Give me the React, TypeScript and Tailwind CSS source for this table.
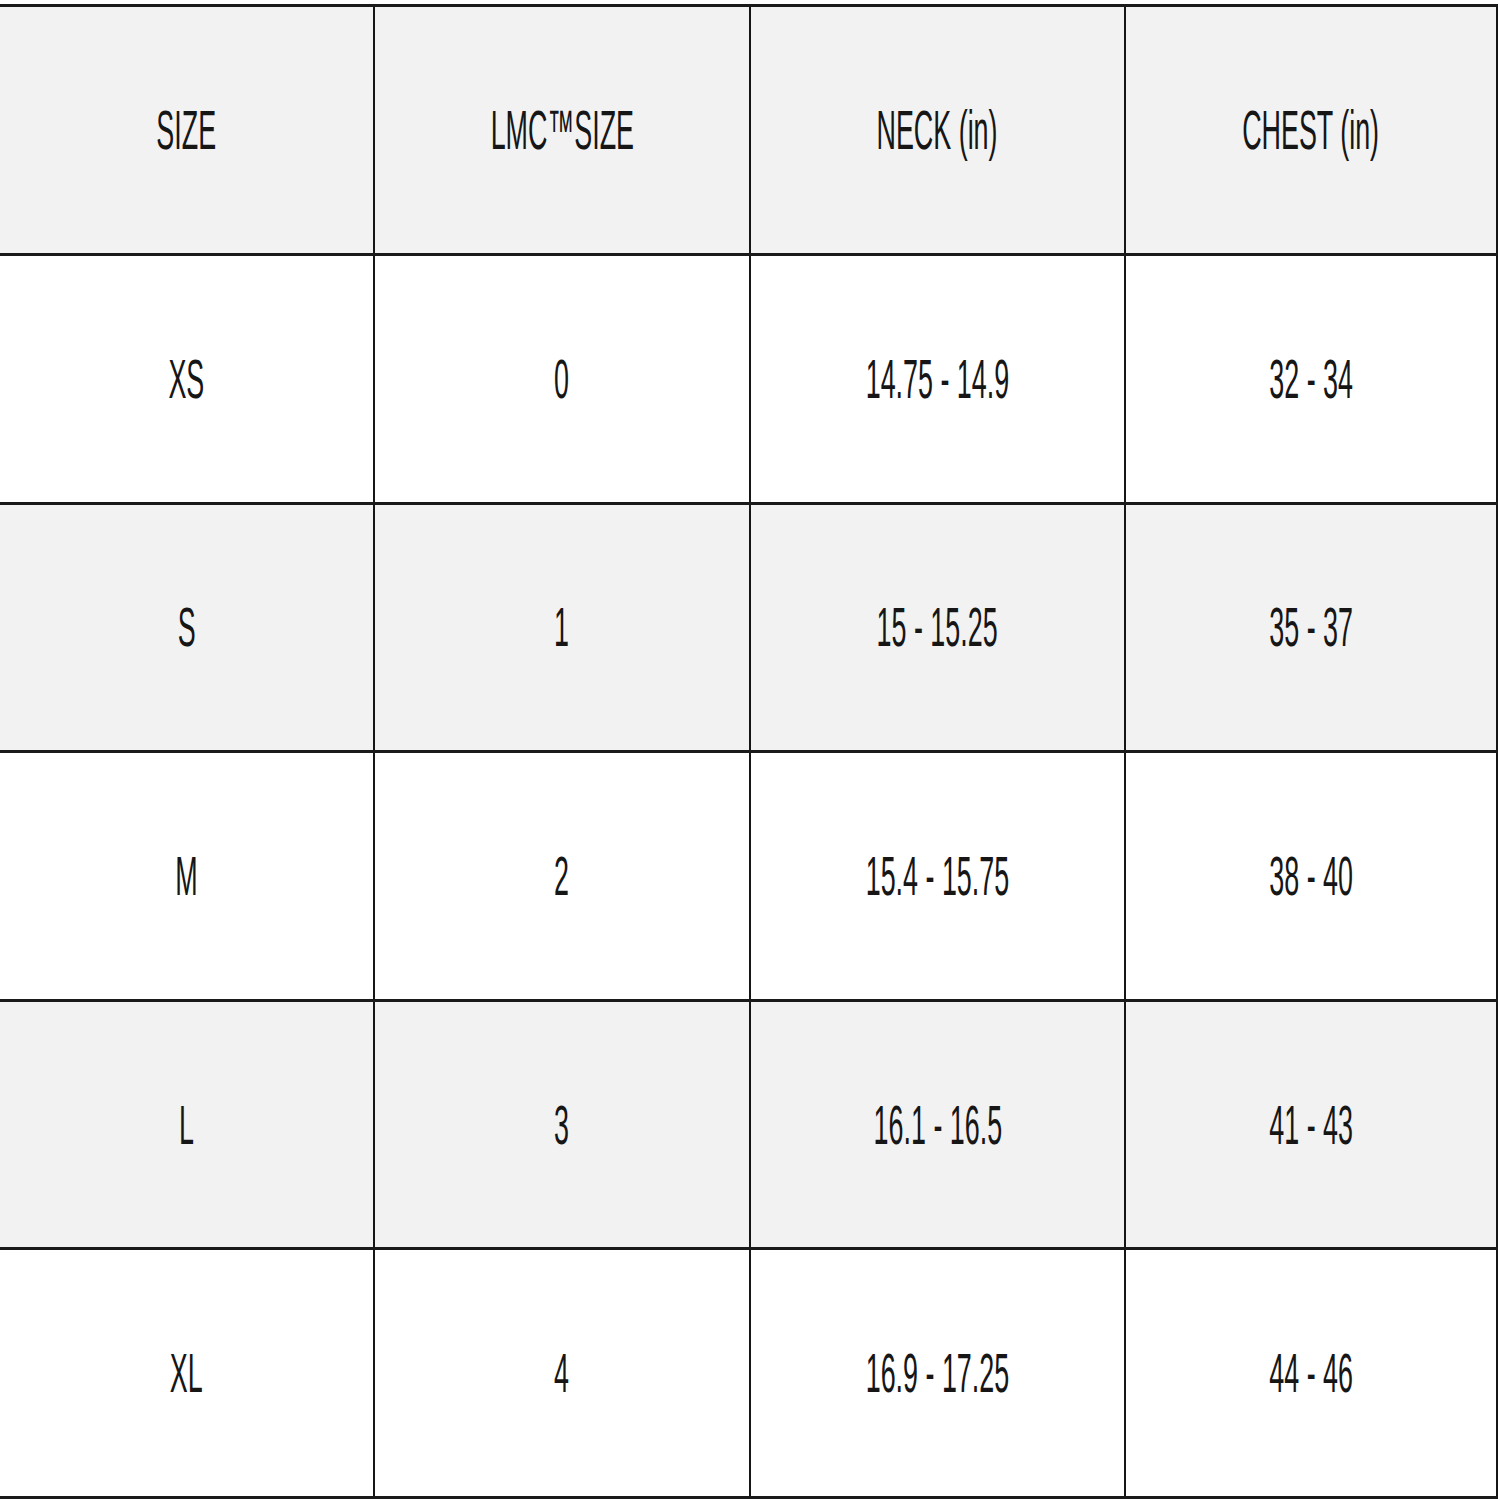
import React from 'react';

const header = ['SIZE', 'LMC™SIZE', 'NECK (in)', 'CHEST (in)'];

const rows = [
  ['XS', '0', '14.75 - 14.9', '32 - 34'],
  ['S', '1', '15 - 15.25', '35 - 37'],
  ['M', '2', '15.4 - 15.75', '38 - 40'],
  ['L', '3', '16.1 - 16.5', '41 - 43'],
  ['XL', '4', '16.9 - 17.25', '44 - 46'],
];

function Cell({ text }: { text: string }) {
  return (
    <div className="flex items-center justify-center border-r-2 border-[#161616]">
      <span className="inline-block scale-x-[0.48] whitespace-nowrap text-[56px] leading-none text-[#161616] [font-family:'Liberation_Sans',Arial,sans-serif]">
        {text}
      </span>
    </div>
  );
}

export default function App() {
  return (
    <div className="w-[1500px] h-[1500px] bg-white pt-[4px] overflow-hidden">
      <div className="w-[1498px] border-b-[3px] border-[#1a1a1a]">
        <div className="grid grid-cols-[375px_376px_375px_372px] h-[249px] border-t-[3px] border-[#1a1a1a] bg-[#f2f2f2]">
          {header.map((h) => (
            <Cell key={h} text={h} />
          ))}
        </div>
        {rows.map((r, i) => (
          <div
            key={r[0]}
            className={`grid grid-cols-[375px_376px_375px_372px] h-[248.6px] border-t-[3px] border-[#1a1a1a] ${
              i % 2 === 1 ? 'bg-[#f2f2f2]' : 'bg-white'
            }`}
          >
            {r.map((c, j) => (
              <Cell key={j} text={c} />
            ))}
          </div>
        ))}
      </div>
    </div>
  );
}
